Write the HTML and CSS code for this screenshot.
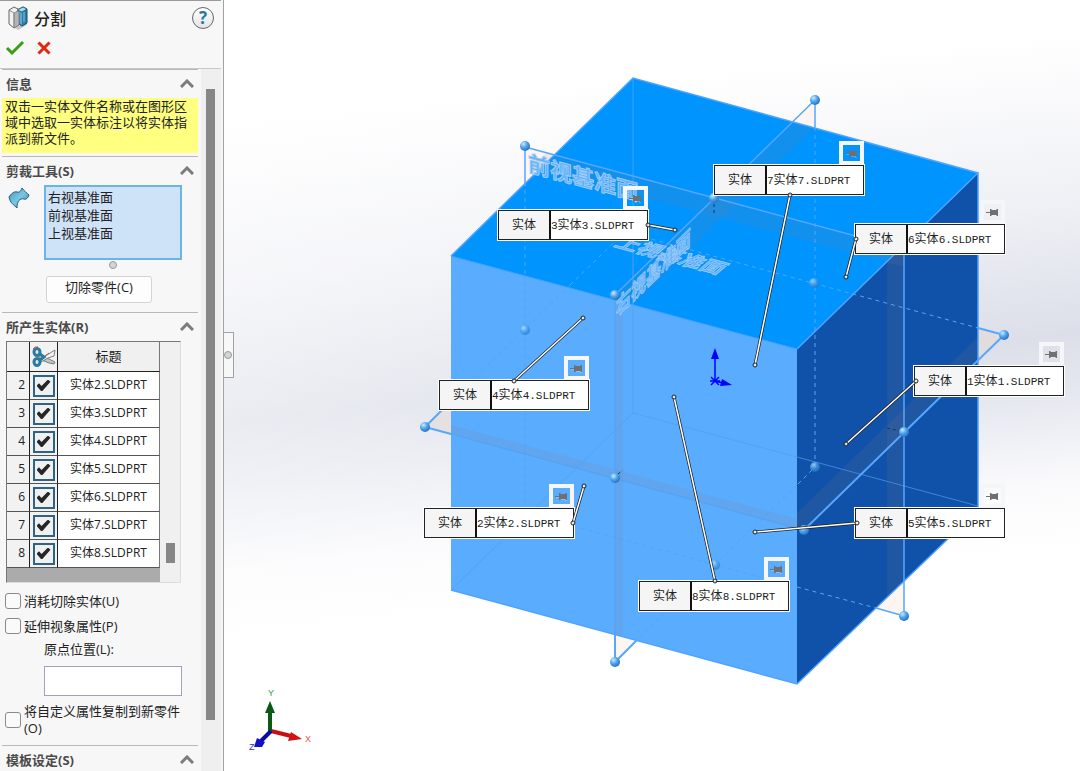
FILE: index.html
```html
<!DOCTYPE html>
<html lang="zh-CN">
<head>
<meta charset="utf-8">
<meta name="viewport" content="width=device-width, initial-scale=1">
<title>分割</title>
<link rel="stylesheet" href="styles.css">
</head>
<body>

<div class="app">
<aside class="panel">

  <header class="panel-head">
    <div class="title-row">
      <svg class="title-icon" width="22" height="24" viewBox="0 0 22 24">
        <path d="M7 22l3 2 9-5-1-3z" fill="#000" fill-opacity=".2"/>
        <path d="M9 4l6-3 4 2v14l-5 3-5-3z" fill="#2d7ea6" stroke="#174f6c"/>
        <path d="M9 4l6-3 4 2-5 3z" fill="#a5dbf0" stroke="#174f6c" stroke-width=".7"/>
        <path d="M10 5l4 2v12l-4-3z" fill="#57acd0"/>
        <path d="M16 6v10" stroke="#7cc6e4" fill="none"/>
        <path d="M1 4l5-3 4 2-1 3 2 1v12l-5 3-5-4z" fill="#f1f1f1" stroke="#666"/>
        <path d="M6 7l4-2 1 1v13l-5 3z" fill="#b4b4b4" stroke="#777" stroke-width=".7"/>
        <path d="M1 4l5 3v15" fill="none" stroke="#8b8b8b"/>
      </svg>
      <h1>分割</h1>
      <button class="help" aria-label="帮助">?</button>
    </div>
    <div class="confirm-row">
      <button class="icon-btn" aria-label="确定">
        <svg width="20" height="16" viewBox="0 0 20 16"><path d="M2 8l5 5L18 2" fill="none" stroke="#35a012" stroke-width="3"/></svg>
      </button>
      <button class="icon-btn" aria-label="取消">
        <svg width="14" height="14" viewBox="0 0 14 14"><path d="M1.500 1.500l11 11M12.500 1.500l-11 11" fill="none" stroke="#dc2a0a" stroke-width="3"/></svg>
      </button>
    </div>
  </header>

  <div class="panel-body">
  <div class="sections">

    <section class="section">
      <h2>信息<svg class="chevron" viewBox="0 0 14 9"><path d="M1 8l6-6 6 6"/></svg></h2>
      <p class="note">双击一实体文件名称或在图形区域中选取一实体标注以将实体指派到新文件。</p>
    </section>

    <section class="section">
      <h2>剪裁工具(S)<svg class="chevron" viewBox="0 0 14 9"><path d="M1 8l6-6 6 6"/></svg></h2>
      <div class="tool-row">
        <svg class="surface-icon" width="22" height="22" viewBox="0 0 22 22">
          <defs><linearGradient id="surf" x1="0" y1="0" x2="1" y2="1"><stop offset="0" stop-color="#3f92b8"/><stop offset=".5" stop-color="#7cc6e2"/><stop offset="1" stop-color="#2d7ea4"/></linearGradient></defs>
          <path d="M1 10C3 7 6 4 9 5C12 6 13 3 14 1C16 4 19 6 21 8C20 11 18 13 16 12C12 11 9 14 9 21C6 18 2 16 1 10z" fill="url(#surf)" stroke="#1f5f80"/>
        </svg>
        <div class="tool-col">
          <select class="tool-list" multiple size="3" aria-label="剪裁工具">
            <option>右视基准面</option>
            <option>前视基准面</option>
            <option>上视基准面</option>
          </select>
          <span class="knob"></span>
          <button class="cut-btn">切除零件(C)</button>
        </div>
      </div>
    </section>

    <section class="section">
      <h2>所产生实体(R)<svg class="chevron" viewBox="0 0 14 9"><path d="M1 8l6-6 6 6"/></svg></h2>
      <div class="grid-box">
        <div class="grid-main">
        <table class="bodies">
          <thead>
            <tr>
              <th class="num"></th>
              <th class="tick">
                <svg width="26" height="24" viewBox="0 0 26 24">
                  <path d="M8 9L24 17l-1 2-5-1-10-4z" fill="#c4c4c4" stroke="#666" stroke-width=".8"/>
                  <path d="M8 15L24 5l-1 6-6 2-7 4z" fill="#f2f2f2" stroke="#666" stroke-width=".8"/>
                  <ellipse cx="6" cy="7" rx="3" ry="3.500" fill="#e4e9d0" stroke="#2a7ba3" stroke-width="3"/>
                  <ellipse cx="6" cy="17" rx="3" ry="3.500" fill="#e4e9d0" stroke="#2a7ba3" stroke-width="3"/>
                  <path d="M9 9l4 3-4 3" fill="none" stroke="#2a7ba3" stroke-width="3"/>
                  <path d="M2 4q2-3 5-2M14 11l4-3" fill="none" stroke="#d0483c"/>
                </svg>
              </th>
              <th>标题</th>
            </tr>
          </thead>
          <tbody>
            <tr><td class="num">2</td><td class="tick"><input type="checkbox" checked aria-label="实体2"></td><td>实体2.SLDPRT</td></tr>
            <tr><td class="num">3</td><td class="tick"><input type="checkbox" checked aria-label="实体3"></td><td>实体3.SLDPRT</td></tr>
            <tr><td class="num">4</td><td class="tick"><input type="checkbox" checked aria-label="实体4"></td><td>实体4.SLDPRT</td></tr>
            <tr><td class="num">5</td><td class="tick"><input type="checkbox" checked aria-label="实体5"></td><td>实体5.SLDPRT</td></tr>
            <tr><td class="num">6</td><td class="tick"><input type="checkbox" checked aria-label="实体6"></td><td>实体6.SLDPRT</td></tr>
            <tr><td class="num">7</td><td class="tick"><input type="checkbox" checked aria-label="实体7"></td><td>实体7.SLDPRT</td></tr>
            <tr><td class="num">8</td><td class="tick"><input type="checkbox" checked aria-label="实体8"></td><td>实体8.SLDPRT</td></tr>
          </tbody>
        </table>
        </div>
        <div class="grid-scroll"><span></span></div>
      </div>

      <label class="option"><input type="checkbox"><span>消耗切除实体(U)</span></label>
      <label class="option"><input type="checkbox"><span>延伸视象属性(P)</span></label>
      <div class="origin">
        <label for="origin">原点位置(L):</label>
        <input type="text" id="origin">
      </div>
      <label class="option option-tall"><input type="checkbox"><span>将自定义属性复制到新零件(O)</span></label>
    </section>

    <section class="section">
      <h2>模板设定(S)<svg class="chevron" viewBox="0 0 14 9"><path d="M1 8l6-6 6 6"/></svg></h2>
    </section>

  </div>
  <div class="panel-scroll"><span></span></div>
  </div>
</aside>

<main class="view">
  <button class="splitter" aria-label="收起面板"><span class="knob"></span></button>

  <svg class="layer" aria-hidden="true">
    <defs>
      <radialGradient id="ball" cx=".35" cy=".3" r=".8">
        <stop offset="0" stop-color="#c8ecff"/><stop offset=".45" stop-color="#4fa6ea"/><stop offset="1" stop-color="#1f66b8"/>
      </radialGradient>
    </defs>
    <g transform="translate(-224 0)">
      <!-- parts of the planes outside the solid -->
      <g fill="#fdf5ef">
        <path d="M525 147l35 9-35 30z"/>
        <path d="M815 100v27l-22-6z"/>
        <path d="M425 427l26-26v33z" fill="#e6e0e0"/>
        <path d="M1004 335l-26-7v33z" fill="#e3dcdd"/>
        <path d="M904 616l-28-8 28-29z"/>
        <path d="M615 662v-28l22 6z"/>
      </g>

      <!-- solid -->
      <path d="M633 78L978 173 797 349 451 256z" fill="#0094ff"/>
      <path d="M451 256L797 349V684L451 590z" fill="#5aacff"/>
      <path d="M797 349L978 173V510L797 684z" fill="#1052a9"/>

      <!-- plane bands -->
      <g fill="#887f78" fill-opacity=".13">
        <path d="M546 153L904 249v18L531 167z"/>
        <path d="M793 121l22 6L637 301l-22-6z"/>
        <path d="M451 425L797 519v10L451 434z"/>
        <path d="M615 295l8 5v336l-8-2z"/>
        <path d="M887 262l17-16v333l-17 17z"/>
        <path d="M797 513L978 337v23L804 530l-7-2z"/>
      </g>

      <!-- solid edges -->
      <g fill="none" stroke="#4ea3ff" stroke-width="2">
        <path d="M451 256L633 78 978 173 797 349M978 173V510L797 684 451 590" stroke-width="1.500"/>
        <path d="M451 256L797 349" stroke="#3a9dff" stroke-width="1"/>
        <path d="M633 78V256" stroke="#3aa3ff" stroke-width="1"/>
        <path d="M633 256V413L797 457M633 413L451 590" stroke="#52a3f6" stroke-width="1"/>
        <path d="M797 457L978 506" stroke="#3d86d9" stroke-width="1"/>
      </g>

      <!-- reference planes -->
      <g fill="none" stroke="#55a7ff" stroke-width="2">
        <path d="M525 186V147L904 249V616L876 608" stroke-width="1.500"/>
        <path d="M815 127V100L615 295" stroke-width="1.500"/>
        <path d="M615 634V662L637 640"/>
        <path d="M451 401L425 427L451 434"/>
        <path d="M978 328L1004 335 804 530"/>
        <path d="M615 295V634M451 434L804 530" stroke="#51a2f5" stroke-width="1"/>
      </g>
      <g fill="none" stroke="#53a6f5" stroke-dasharray="4 4">
        <path d="M525 190V275M570 285L625 232 978 328"/>
        <path d="M815 127V467L797 485M797 587L876 608"/>
        <path d="M525 275V513L797 587M570 285L451 401M797 485L637 640" stroke="#529ff0" stroke-opacity=".6"/>
      </g>
      <g fill="none" stroke="#12345c" stroke-width="1" stroke-dasharray="3 3">
        <path d="M714 204V216M887 428L900 431M618 474L623 470"/>
      </g>

      <!-- plane names -->
      <g class="plane-name">
        <text transform="matrix(1 .27 0 1 528 171)">前视基准面</text>
        <text transform="matrix(.96 .26 -.7 .6 613 246)">上视基准面</text>
        <text transform="matrix(.68 -.66 0 1 616 317)">右视基准面</text>
      </g>

      <!-- handles -->
      <g fill="url(#ball)">
        <circle cx="525" cy="146" r="5"/><circle cx="815" cy="100" r="5"/>
        <circle cx="615" cy="295" r="5"/><circle cx="714" cy="198" r="5"/>
        <circle cx="425" cy="427" r="5"/><circle cx="615" cy="478" r="5"/>
        <circle cx="1004" cy="335" r="5"/><circle cx="904" cy="432" r="5"/>
        <circle cx="804" cy="530" r="5"/><circle cx="904" cy="616" r="5"/>
        <circle cx="615" cy="662" r="5"/>
        <g opacity=".7">
          <circle cx="525" cy="330" r="5"/><circle cx="814" cy="283" r="5"/>
          <circle cx="815" cy="467" r="5"/><circle cx="715" cy="565" r="5"/>
        </g>
      </g>

      <!-- origin -->
      <g stroke="#00f" fill="#00f">
        <path d="M715 381V356M715 381l8 2M711 377l8 8M719 377l-8 8M710 381h10" stroke-width="1.500"/>
        <path d="M715 348l4 11h-8zM732 385l-12 1 2-7z" stroke="none"/>
      </g>

      <!-- triad -->
      <path d="M271 731l20 5" stroke="#c80f0f" stroke-width="4"/>
      <path d="M302 739l-14 2 3-9z" fill="#d21212"/>
      <path d="M270 732V711" stroke="#0b5a14" stroke-width="4"/>
      <path d="M270 701l5 12h-10z" fill="#0b5a14"/>
      <path d="M271 731l-10 10" stroke="#0c0ca0" stroke-width="4"/>
      <path d="M254 747l3-9 8 4-3 5z" fill="#1212c4"/>
      <g class="axis-name">
        <text x="268" y="696" fill="#3a9a45">Y</text>
        <text x="305" y="742" fill="#f05050">X</text>
        <text x="249" y="750" fill="#3030e0">Z</text>
      </g>
    </g>
  </svg>

  <svg class="defs" width="0" height="0" aria-hidden="true">
    <symbol id="pin" viewBox="0 0 13 9">
      <path d="M1 5h5v2M6 7h5v2" fill="none" stroke="#fff" stroke-opacity=".5"/>
      <path d="M0 4h4V1h1l1 1h4l1-1h1v7h-1l-1-1H6L5 8H4V5H0z" fill="#707070"/>
    </symbol>
  </svg>

  <div class="callout c3"><span class="kind">实体</span><span class="file"><i>3</i>实体<i>3.SLDPRT</i></span><button class="pin" aria-label="固定"><svg><use href="#pin"/></svg></button></div>
  <div class="callout c7"><span class="kind">实体</span><span class="file"><i>7</i>实体<i>7.SLDPRT</i></span><button class="pin" aria-label="固定"><svg><use href="#pin"/></svg></button></div>
  <div class="callout c6"><span class="kind">实体</span><span class="file"><i>6</i>实体<i>6.SLDPRT</i></span><button class="pin" aria-label="固定"><svg><use href="#pin"/></svg></button></div>
  <div class="callout c4"><span class="kind">实体</span><span class="file"><i>4</i>实体<i>4.SLDPRT</i></span><button class="pin" aria-label="固定"><svg><use href="#pin"/></svg></button></div>
  <div class="callout c1"><span class="kind">实体</span><span class="file"><i>1</i>实体<i>1.SLDPRT</i></span><button class="pin" aria-label="固定"><svg><use href="#pin"/></svg></button></div>
  <div class="callout c2"><span class="kind">实体</span><span class="file"><i>2</i>实体<i>2.SLDPRT</i></span><button class="pin" aria-label="固定"><svg><use href="#pin"/></svg></button></div>
  <div class="callout c5"><span class="kind">实体</span><span class="file"><i>5</i>实体<i>5.SLDPRT</i></span><button class="pin" aria-label="固定"><svg><use href="#pin"/></svg></button></div>
  <div class="callout c8"><span class="kind">实体</span><span class="file"><i>8</i>实体<i>8.SLDPRT</i></span><button class="pin" aria-label="固定"><svg><use href="#pin"/></svg></button></div>

  <svg class="layer leaders" aria-hidden="true">
    <g transform="translate(-224 0)">
      <path d="M648 225L675 230M790 195L755 365M856 239L846 277M514 381L583 318M573 523L584 486M916 381L846 444M857 523L755 532M715 581L674 397" stroke="#222" stroke-width="3"/>
      <path d="M648 225L675 230M790 195L755 365M856 239L846 277M514 381L583 318M573 523L584 486M916 381L846 444M857 523L755 532M715 581L674 397" stroke="#fff" stroke-width="1.500"/>
      <g fill="#fff" fill-opacity=".7" stroke="#222">
        <circle cx="648" cy="225" r="2"/><circle cx="675" cy="230" r="2"/>
        <circle cx="790" cy="195" r="2"/><circle cx="755" cy="365" r="2"/>
        <circle cx="856" cy="239" r="2"/><circle cx="846" cy="277" r="2"/>
        <circle cx="514" cy="381" r="2"/><circle cx="583" cy="318" r="2"/>
        <circle cx="573" cy="523" r="2"/><circle cx="584" cy="486" r="2"/>
        <circle cx="916" cy="381" r="2"/><circle cx="846" cy="444" r="2"/>
        <circle cx="857" cy="523" r="2"/><circle cx="755" cy="532" r="2"/>
        <circle cx="715" cy="581" r="2"/><circle cx="674" cy="397" r="2"/>
      </g>
    </g>
  </svg>
</main>
</div>

</body>
</html>
```
FILE: styles.css
```css
* {box-sizing: border-box;}

body {
  margin: 0;
  font-family: "Open Sans", "Noto Sans CJK SC", sans-serif;
  font-size: 13px;
  color: #222;
}

button, input, select {
  font: inherit;
  color: inherit;
  margin: 0;
}

.app {
  display: flex;
  min-height: 100vh;
}

/* Left panel */
.panel {
  display: flex;
  flex-direction: column;
  flex: 0 0 224px;
  background: #f7f7f7;
  border-right: 1px solid #a2a2a2;
}

.panel-head {
  height: 69px;
  margin-right: 2px;
  padding: 4px 7px 0 8px;
  border-top: 1px solid #999;
  border-bottom: 1px solid #c8c8c8;
}

.title-row {
  display: flex;
  align-items: center;
  height: 26px;
}

.title-row h1 {
  flex: 1;
  margin: 0 0 0 4px;
  font-size: 16px;
  font-weight: 500;
}

.help {
  width: 22px;
  height: 22px;
  padding: 0;
  border: 1px solid #666;
  border-radius: 50%;
  background: linear-gradient(#fff, #e4e4e4);
  color: #2778a0;
  font-size: 17px;
  font-weight: bold;
  line-height: 20px;
}

.confirm-row {
  display: flex;
  align-items: center;
  gap: 12px;
  height: 34px;
  margin-left: -3px;
}

.icon-btn {
  display: flex;
  padding: 0;
  border: 0;
  background: none;
}

.panel-body {
  display: flex;
  flex: 1;
}

.sections {
  flex: 1;
  padding: 0 3px 0 2px;
}

.section {border-top: 1px solid #b8b8b8;}

.section h2 {
  display: flex;
  align-items: center;
  justify-content: space-between;
  height: 28px;
  margin: 0;
  padding: 0 4px 2px;
  font-size: 13px;
  font-weight: bold;
  color: #4a4a4a;
}

.chevron {
  width: 14px;
  height: 9px;
  fill: none;
  stroke: #7c7c7c;
  stroke-width: 3;
}

.note {
  margin: 0 0 3px;
  padding: 0 4px 7px 3px;
  background: #ffff80;
  line-height: 16px;
}

.tool-row {
  display: flex;
  align-items: flex-start;
  gap: 14px;
  padding: 0 16px 9px 6px;
}

.surface-icon {margin-top: 2px;}

.tool-col {
  display: flex;
  flex-direction: column;
  align-items: center;
  flex: 1;
}

.tool-list {
  width: 100%;
  height: 75px;
  padding: 0;
  border: 2px solid #68b5e6;
  border-radius: 0;
  outline: 0;
  background: #cfe3f8;
  overflow: hidden;
}

.tool-list option {
  height: 18px;
  min-height: 0;
  padding: 0 2px;
  line-height: 18px;
}

.knob {
  width: 8px;
  height: 8px;
  border: 1px solid #999;
  border-radius: 50%;
  background: #d4d4d4;
}

.tool-col .knob {margin: 1px 0 7px;}

.cut-btn {
  align-self: flex-start;
  width: 106px;
  height: 27px;
  margin-left: 2px;
  padding: 0 0 6px;
  border: 1px solid #d4d4d4;
  border-radius: 3px;
  background: #fdfdfd;
}

/* Table of bodies */
.grid-box {
  display: flex;
  height: 242px;
  margin: 0 17px 5px 4px;
  border: 1px solid #ddd;
  border-top-color: #777;
  border-left-color: #777;
  background: #f0f0f0;
}

.grid-main {
  flex: 1;
  background: #ababab;
}

.grid-scroll {
  display: flex;
  align-items: flex-end;
  justify-content: center;
  width: 20px;
  padding-bottom: 19px;
}

.grid-scroll span {
  width: 9px;
  height: 20px;
  background: #868686;
}

.bodies {
  width: 100%;
  border-collapse: separate;
  border-spacing: 0;
  table-layout: fixed;
}

.bodies th, .bodies td {
  height: 28px;
  padding: 0 0 1px;
  border-right: 1px solid #777;
  border-bottom: 1px solid #555;
  background: #fff;
  font-size: 12px;
  font-weight: normal;
  line-height: 16px;
  text-align: center;
}

.bodies th {
  height: 30px;
  background: #f0f0f0;
  border-bottom-color: #222;
  font-size: 13px;
}

.bodies .num {
  width: 23px;
  padding-right: 4px;
  background: #f2f2f2;
  border-right-color: #222;
  text-align: right;
}

.bodies .tick {
  width: 28px;
  padding: 0;
  background: #f2f2f2;
  border-right-color: #222;
}

.bodies .tick svg, .bodies .tick input {
  display: block;
  margin: 0 auto;
}

.bodies input {
  appearance: none;
  width: 22px;
  height: 22px;
  padding: 3px 2px;
  border: 2px solid #2d6484;
  background: #f0f0f0;
}

.bodies input:checked::before {
  content: "";
  display: block;
  width: 14px;
  height: 12px;
  background: #262626;
  clip-path: polygon(0 52%, 18% 32%, 36% 54%, 82% 0, 100% 18%, 42% 96%, 32% 96%);
}

.option {
  display: flex;
  align-items: center;
  gap: 3px;
  height: 25px;
  padding: 0 12px 0 3px;
}

.option input {
  appearance: none;
  flex: none;
  width: 16px;
  height: 16px;
  border: 1px solid #8a8a8a;
  border-radius: 3px;
  background: #fafafa;
}

.option-tall {
  height: 34px;
  margin: 7px 0 8px;
  line-height: 17px;
}

.origin {padding: 0 16px 0 42px;}

.origin label {
  display: block;
  height: 28px;
  line-height: 22px;
}

.origin input {
  display: block;
  width: 100%;
  height: 30px;
  border: 1px solid #a0a4ba;
  background: #fff;
}

.panel-scroll {
  width: 20px;
  margin-right: 2px;
  padding: 20px 6px 0 5px;
  background: #efefef;
}

.panel-scroll span {
  display: block;
  height: 631px;
  background: #868686;
}

/* Graphics area */
.view {
  position: relative;
  flex: 1;
  overflow: hidden;
  background:
    linear-gradient(90deg, rgba(255, 255, 255, .4), rgba(255, 255, 255, 0) 80%),
    linear-gradient(174deg, #fff 14%, #eff0f5 34%, #dcdfe9 49%, #e6e8f0 56%, #fafafc 66%, #fff 74%);
}

.layer {
  position: absolute;
  inset: 0;
  width: 100%;
  height: 100%;
}

.leaders {pointer-events: none;}

.defs {position: absolute;}

.splitter {
  position: absolute;
  left: -1px;
  top: 332px;
  width: 11px;
  height: 46px;
  padding: 0;
  border: 1px solid #a2a2a2;
  border-left: 0;
  background: #f7f7f7;
}

.splitter .knob {
  display: block;
  margin-left: 1px;
}

.plane-name {
  font-family: "Noto Sans CJK SC", sans-serif;
  font-size: 22px;
  font-weight: bold;
  fill: #5fb0fb;
  stroke: #9ccbf8;
  stroke-width: 1;
}

.axis-name {
  font-family: "Liberation Sans", sans-serif;
  font-size: 9px;
}

.callout {
  position: absolute;
  display: flex;
  width: 150px;
  height: 30px;
  border: 1px solid #222;
  outline: 1px solid #fff;
  background: #fff;
  line-height: 28px;
}

.kind {
  width: 52px;
  border-right: 2px solid #111;
  background: #f5f5f5;
  font-size: 12px;
  text-align: center;
}

.file {
  flex: 1;
  font-size: 12px;
  white-space: nowrap;
}

.file i {
  font-family: "Liberation Mono", monospace;
  font-size: 11px;
  font-style: normal;
}

.pin {
  position: absolute;
  right: -1px;
  top: -25px;
  display: flex;
  align-items: center;
  justify-content: center;
  width: 25px;
  height: 24px;
  padding: 0;
  border: 4px solid #f5f6f8;
  background: none;
}

.pin svg {
  width: 13px;
  height: 9px;
}

.c3 {left: 274px; top: 210px;}
.c7 {left: 490px; top: 165px;}
.c6 {left: 631px; top: 224px;}
.c4 {left: 215px; top: 380px;}
.c1 {left: 690px; top: 366px;}
.c2 {left: 200px; top: 508px;}
.c5 {left: 631px; top: 508px;}
.c8 {left: 415px; top: 581px;}
```
